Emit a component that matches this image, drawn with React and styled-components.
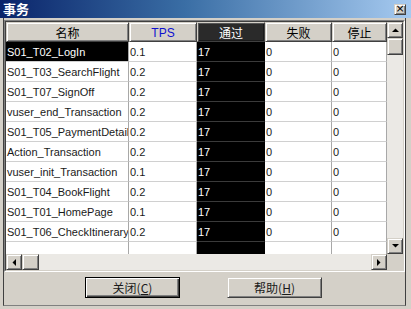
import React from 'react'
import styled, { createGlobalStyle } from 'styled-components'

const GlobalStyle = createGlobalStyle`
  html, body { margin: 0; padding: 0; background: #d4d0c8; }
  body { font-family: "Liberation Sans", Arial, "Noto Sans CJK SC", sans-serif; }
  * { box-sizing: border-box; }
`

const columns = [
  { title: '名称', width: 123 },
  { title: 'TPS', width: 68, color: '#1010d0' },
  { title: '通过', width: 68, dark: true },
  { title: '失败', width: 67 },
  { title: '停止', width: 55 },
]

const rows = [
  ['S01_T02_LogIn', '0.1'],
  ['S01_T03_SearchFlight', '0.2'],
  ['S01_T07_SignOff', '0.2'],
  ['vuser_end_Transaction', '0.2'],
  ['S01_T05_PaymentDetail', '0.2'],
  ['Action_Transaction', '0.2'],
  ['vuser_init_Transaction', '0.1'],
  ['S01_T04_BookFlight', '0.2'],
  ['S01_T01_HomePage', '0.1'],
  ['S01_T06_CheckItinerary', '0.2'],
]

const raised = `
  border: 1px solid;
  border-color: #d4d0c8 #404040 #404040 #d4d0c8;
  box-shadow: inset 1px 1px #ffffff, inset -1px -1px #808080;
  background: #d4d0c8;
`

const Arrow = ({ dir }) => {
  const pts = {
    up: '0,4 7,4 3.5,0.5',
    down: '0,0 7,0 3.5,3.5',
    left: '4,0 4,7 0.5,3.5',
    right: '0,0 0,7 3.5,3.5',
  }[dir]
  const vertical = dir === 'up' || dir === 'down'
  return (
    <svg width={vertical ? 7 : 4} height={vertical ? 4 : 7} viewBox={vertical ? '0 0 7 4' : '0 0 4 7'}>
      <polygon points={pts} fill="#000" />
    </svg>
  )
}

const App = () => {
  return (
    <>
      <GlobalStyle />
      <Window>
        <TitleBar>
          <Title>事务</Title>
          <CloseBox>×</CloseBox>
        </TitleBar>
        <Client>
          <GridFrame>
            <GridInner>
              <TableArea>
                <Table>
                  {columns.map((c) => (
                    <HeadCell key={c.title} $dark={c.dark} $color={c.color}>
                      {c.title}
                    </HeadCell>
                  ))}
                  {rows.map((r, ri) => (
                    <React.Fragment key={r[0]}>
                      <Cell $selected={ri === 0}>{r[0]}</Cell>
                      <Cell>{r[1]}</Cell>
                      <Cell $dark>17</Cell>
                      <Cell>0</Cell>
                      <Cell>0</Cell>
                    </React.Fragment>
                  ))}
                  {columns.map((c) => (
                    <Filler key={c.title} $dark={c.dark} />
                  ))}
                </Table>
                <VScroll>
                  <ScrollButton><Arrow dir="up" /></ScrollButton>
                  <VThumb />
                  <Track />
                  <ScrollButton><Arrow dir="down" /></ScrollButton>
                </VScroll>
              </TableArea>
              <HScrollRow>
                <HScroll>
                  <ScrollButton><Arrow dir="left" /></ScrollButton>
                  <HThumb />
                  <Track />
                  <ScrollButton><Arrow dir="right" /></ScrollButton>
                </HScroll>
                <Corner />
              </HScrollRow>
            </GridInner>
          </GridFrame>
          <ButtonRow>
            <DialogButton $default>关闭(<u>C</u>)</DialogButton>
            <DialogButton>帮助(<u>H</u>)</DialogButton>
          </ButtonRow>
        </Client>
      </Window>
    </>
  )
}

export default App

const Window = styled.div`
  width: 411px;
  height: 309px;
  background: #d4d0c8;
  display: flex;
  flex-direction: column;
  overflow: hidden;
`
const TitleBar = styled.div`
  height: 18px;
  display: flex;
  align-items: center;
  justify-content: space-between;
  padding: 0 5px 0 3px;
  background: linear-gradient(to right, #0a246a, #3a6ea5 45%, #a6caf0);
`
const Title = styled.span`
  color: #fff;
  font-family: "Noto Sans CJK SC", sans-serif;
  font-weight: bold;
  font-size: 13px;
  line-height: 18px;
`
const CloseBox = styled.div`
  ${raised}
  width: 12px;
  height: 11px;
  font-size: 11px;
  line-height: 8px;
  text-align: center;
  color: #000;
  font-family: "DejaVu Sans", sans-serif;
`
const Client = styled.div`
  flex: 1;
  margin: 0 5px 3px 3px;
  padding-top: 2px;
  border-left: 1px solid #404040;
  border-right: 1px solid #404040;
  border-bottom: 1px solid #808080;
  display: flex;
  flex-direction: column;
`
const GridFrame = styled.div`
  border: 1px solid;
  border-color: #808080 #ffffff #ffffff #808080;
`
const GridInner = styled.div`
  border: 1px solid;
  border-color: #404040 #d4d0c8 #d4d0c8 #404040;
  background: #fff;
`
const TableArea = styled.div`
  display: flex;
  height: 232px;
`
const Table = styled.div`
  display: grid;
  grid-template-columns: ${columns.map((c) => c.width + 'px').join(' ')};
  grid-template-rows: 20px repeat(${rows.length}, 20px) 12px;
  background: #fff;
`
const HeadCell = styled.div`
  ${raised}
  background: ${(p) => (p.$dark ? '#2a2a2a' : '#d4d0c8')};
  box-shadow: ${(p) => (p.$dark ? 'inset 1px 1px #555, inset -1px -1px #1a1a1a' : 'inset 1px 1px #ffffff, inset -1px -1px #808080')};
  color: ${(p) => (p.$dark ? '#fff' : p.$color || '#000')};
  font-family: ${(p) => (p.$color ? '"Liberation Sans", Arial, sans-serif' : '"Noto Sans CJK SC", sans-serif')};
  font-size: 12px;
  display: flex;
  align-items: center;
  justify-content: center;
  padding-top: 1px;
`
const Cell = styled.div`
  background: ${(p) => (p.$dark || p.$selected ? '#000' : '#fff')};
  color: ${(p) => (p.$dark || p.$selected ? '#fff' : '#1a1a1a')};
  border-right: 1px solid ${(p) => (p.$dark ? '#000' : '#a8a8a8')};
  border-bottom: 1px solid ${(p) => (p.$dark ? '#3a3a3a' : '#d0d0d0')};
  font-size: 11px;
  line-height: 20px;
  padding-left: 1px;
  white-space: nowrap;
  overflow: hidden;
`
const Filler = styled.div`
  background: ${(p) => (p.$dark ? '#000' : '#fff')};
  border-right: 1px solid ${(p) => (p.$dark ? '#000' : '#a8a8a8')};
`
const VScroll = styled.div`
  width: 16px;
  display: flex;
  flex-direction: column;
`
const ScrollButton = styled.div`
  ${raised}
  width: 16px;
  height: 16px;
  flex: none;
  display: flex;
  align-items: center;
  justify-content: center;
`
const VThumb = styled.div`
  ${raised}
  width: 16px;
  height: 17px;
  flex: none;
`
const HThumb = styled.div`
  ${raised}
  width: 17px;
  height: 16px;
  flex: none;
`
const Track = styled.div`
  flex: 1;
  background: #ebe9e5;
`
const HScrollRow = styled.div`
  display: flex;
  height: 16px;
`
const HScroll = styled.div`
  width: 381px;
  display: flex;
`
const Corner = styled.div`
  width: 16px;
  background: #d4d0c8;
`
const ButtonRow = styled.div`
  display: flex;
  justify-content: center;
  gap: 47px;
  margin-top: 5px;
  padding-right: 2px;
`
const DialogButton = styled.button`
  ${raised}
  width: 95px;
  height: 21px;
  padding: 0;
  font-family: "Noto Sans CJK SC", sans-serif;
  font-size: 12px;
  color: #1a1a1a;
  ${(p) =>
    p.$default &&
    `
    border: 1px solid #000;
    box-shadow: inset 1px 1px #ffffff, inset -1px -1px #404040, inset -2px -2px #808080;
  `}
  u { text-decoration: underline; }
`
